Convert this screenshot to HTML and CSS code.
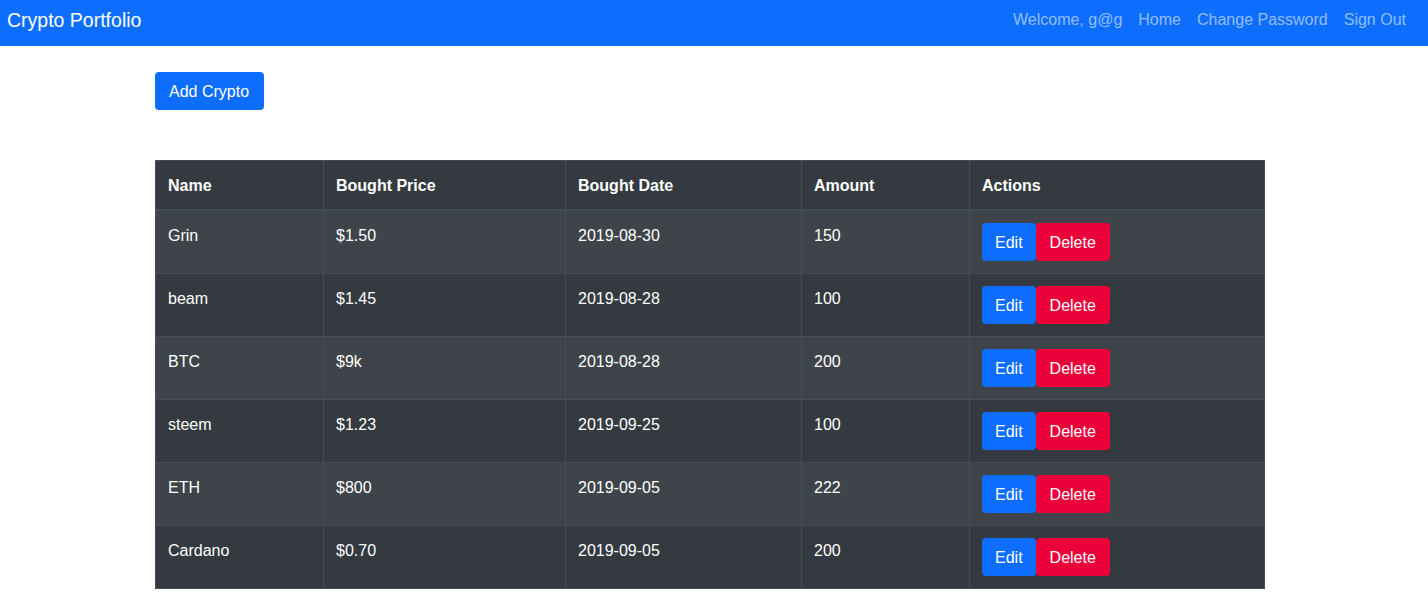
FILE: index.html
```html
<!DOCTYPE html>
<html lang="en">
<head>
<meta charset="utf-8">
<title>Crypto Portfolio</title>
<link rel="stylesheet" href="styles.css">
</head>
<body>
<nav class="navbar">
  <a class="brand" href="#">Crypto Portfolio</a>
  <div class="nav-links">
    <span class="nav-link">Welcome, g@g</span>
    <a class="nav-link" href="#">Home</a>
    <a class="nav-link" href="#">Change Password</a>
    <a class="nav-link" href="#">Sign Out</a>
  </div>
</nav>
<main class="container">
  <button class="btn btn-primary add-btn">Add Crypto</button>
  <table class="table">
    <thead>
      <tr><th class="c1">Name</th><th class="c2">Bought Price</th><th class="c3">Bought Date</th><th class="c4">Amount</th><th class="c5">Actions</th></tr>
    </thead>
    <tbody>
      <tr><td>Grin</td><td>$1.50</td><td>2019-08-30</td><td>150</td><td><button class="btn btn-primary">Edit</button><button class="btn btn-danger">Delete</button></td></tr>
      <tr><td>beam</td><td>$1.45</td><td>2019-08-28</td><td>100</td><td><button class="btn btn-primary">Edit</button><button class="btn btn-danger">Delete</button></td></tr>
      <tr><td>BTC</td><td>$9k</td><td>2019-08-28</td><td>200</td><td><button class="btn btn-primary">Edit</button><button class="btn btn-danger">Delete</button></td></tr>
      <tr><td>steem</td><td>$1.23</td><td>2019-09-25</td><td>100</td><td><button class="btn btn-primary">Edit</button><button class="btn btn-danger">Delete</button></td></tr>
      <tr><td>ETH</td><td>$800</td><td>2019-09-05</td><td>222</td><td><button class="btn btn-primary">Edit</button><button class="btn btn-danger">Delete</button></td></tr>
      <tr><td>Cardano</td><td>$0.70</td><td>2019-09-05</td><td>200</td><td><button class="btn btn-primary">Edit</button><button class="btn btn-danger">Delete</button></td></tr>
    </tbody>
  </table>
</main>
</body>
</html>
```

FILE: styles.css
```css
* { box-sizing: border-box; }
html, body { margin: 0; }
body {
  font-family: "Liberation Sans", Arial, sans-serif;
  font-size: 16px;
  line-height: 1.5;
  color: #212529;
  background: #fff;
}
.navbar {
  display: flex;
  align-items: center;
  justify-content: space-between;
  height: 46px;
  padding: 0 14px 6px 7px;
  background: #0d6efd;
}
.brand {
  color: #fff;
  font-size: 19.5px;
  text-decoration: none;
  line-height: 30px;
}
.nav-links { display: flex; }
.nav-link {
  color: rgba(255, 255, 255, 0.55);
  text-decoration: none;
  padding: 0 8px;
  font-size: 16px;
  line-height: 24px;
}
.container {
  margin-left: 155px;
  width: 1110px;
  padding-top: 26px;
}
.btn {
  display: inline-block;
  font-family: inherit;
  font-size: 16px;
  line-height: 24px;
  padding: 8px 13px 6px;
  border: 0;
  border-radius: 4px;
  color: #fff;
  cursor: pointer;
  vertical-align: top;
}
.btn-primary { background: #0d6efd; }
.btn-danger { background: #ec0039; padding-left: 14px; padding-right: 14px; }
.add-btn { margin-bottom: 50px; padding-left: 14px; padding-right: 15px; }
.table {
  width: 100%;
  border-collapse: collapse;
  background: #343a40;
  color: #fff;
  border: 1px solid #454d55;
}
.table th, .table td {
  text-align: left;
  vertical-align: top;
  padding: 12px;
  border: 1px solid #454d55;
}
.table th { font-weight: bold; border-bottom-width: 2px; padding-top: 13px; padding-bottom: 11px; }
.table td { padding-top: 13px; padding-bottom: 12px; }
.table td:last-child { padding-top: 12px; }
.table tbody tr:nth-child(odd) { background: #3e444a; }
.c1 { width: 168px; }
.c2 { width: 242px; }
.c3 { width: 236px; }
.c4 { width: 168px; }
```
